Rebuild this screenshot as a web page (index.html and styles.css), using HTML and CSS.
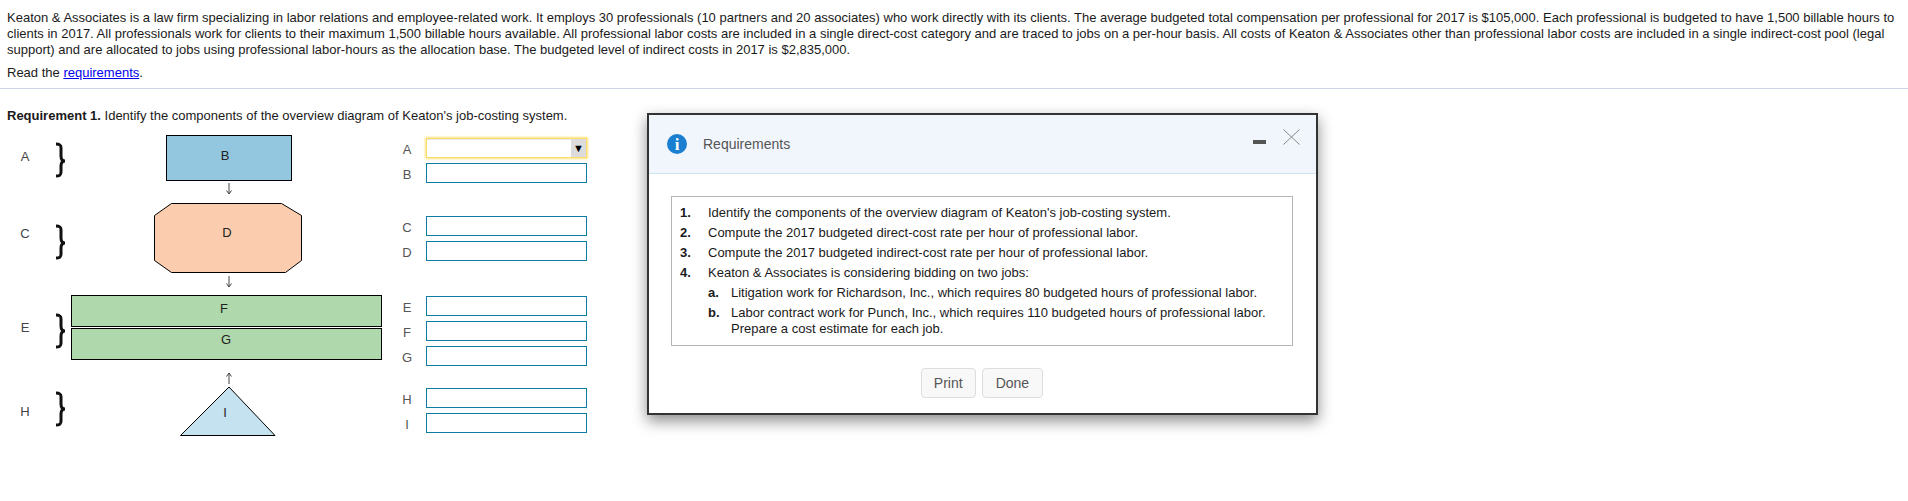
FILE: index.html
```html
<!DOCTYPE html>
<html lang="en">
<head>
  <meta charset="UTF-8">
  <title>Requirement 1</title>
  <link rel="stylesheet" href="styles.css">
</head>
<body>
  <div class="question">
    <p class="intro">Keaton &amp; Associates is a law firm specializing in labor relations and employee-related work. It employs 30 professionals (10 partners and 20 associates) who work directly with its clients. The average budgeted total compensation per professional for 2017 is $105,000. Each professional is budgeted to have 1,500 billable hours to clients in 2017. All professionals work for clients to their maximum 1,500 billable hours available. All professional labor costs are included in a single direct-cost category and are traced to jobs on a per-hour basis. All costs of Keaton &amp; Associates other than professional labor costs are included in a single indirect-cost pool (legal support) and are allocated to jobs using professional labor-hours as the allocation base. The budgeted level of indirect costs in 2017 is $2,835,000.</p>
    <p class="read-line">Read the <a href="#">requirements</a>.</p>
  </div>
  <hr class="divider">
  <p class="req-title"><b>Requirement 1.</b> Identify the components of the overview diagram of Keaton's job-costing system.</p>

  <div class="workspace">
    <!-- Overview diagram -->
    <svg class="diagram" width="397" height="310" viewBox="0 0 397 310">
      <rect x="166.5" y="5.5" width="125" height="45" fill="#93c6df" stroke="#000"/>
      <polygon points="171.5,73.5 281.5,73.5 301.5,85.5 301.5,130.5 285.5,142.5 171.5,142.5 154.5,130.5 154.5,85.5" fill="#fbcdae" stroke="#000"/>
      <rect x="71.5" y="165.5" width="310" height="31" fill="#afd8ac" stroke="#000"/>
      <rect x="71.5" y="198.5" width="310" height="31" fill="#afd8ac" stroke="#000"/>
      <polygon points="229,257 275,305.5 180.5,305.5" fill="#c5e2f0" stroke="#000"/>

      <g class="arrows">
        <path d="M229 53v11M226.500 60.500l2.500 3.500 2.500-3.500"/>
        <path d="M229 146v11M226.500 153.500l2.500 3.500 2.500-3.500"/>
        <path d="M229 254v-11M226.500 246.500l2.500-3.500 2.500 3.500"/>
      </g>

      <g class="braces">
        <path d="M56 14c4 0 5 1 5 4v8c0 3 1 5 4 5-3 0-4 2-4 5v6c0 3-1 4-5 4"/>
        <path d="M56 96c4 0 5 1 5 4v8c0 3 1 5 4 5-3 0-4 2-4 5v6c0 3-1 4-5 4"/>
        <path d="M56 185c4 0 5 1 5 4v7c0 3 1 5 4 5-3 0-4 2-4 5v7c0 3-1 4-5 4"/>
        <path d="M56 263c4 0 5 1 5 4v7c0 3 1 5 4 5-3 0-4 2-4 5v7c0 3-1 4-5 4"/>
      </g>

      <g class="side-labels">
        <text x="25" y="31">A</text>
        <text x="25" y="108">C</text>
        <text x="25" y="202">E</text>
        <text x="25" y="286">H</text>
      </g>
      <g class="node-labels">
        <text x="225" y="30">B</text>
        <text x="227" y="107">D</text>
        <text x="224" y="183">F</text>
        <text x="226" y="214">G</text>
        <text x="225" y="287">I</text>
      </g>
    </svg>

    <div class="answers">
      <div class="answer-group">
        <div class="answer-row">
          <label>A</label>
          <div class="select-box"><span class="select-arrow">▼</span></div>
        </div>
        <div class="answer-row"><label>B</label><div class="answer-input"></div></div>
      </div>
      <div class="answer-group group-c">
        <div class="answer-row"><label>C</label><div class="answer-input"></div></div>
        <div class="answer-row"><label>D</label><div class="answer-input"></div></div>
      </div>
      <div class="answer-group group-e">
        <div class="answer-row"><label>E</label><div class="answer-input"></div></div>
        <div class="answer-row"><label>F</label><div class="answer-input"></div></div>
        <div class="answer-row"><label>G</label><div class="answer-input"></div></div>
      </div>
      <div class="answer-group group-h">
        <div class="answer-row"><label>H</label><div class="answer-input"></div></div>
        <div class="answer-row"><label>I</label><div class="answer-input"></div></div>
      </div>
    </div>
  </div>

  <!-- Requirements popup -->
  <div class="modal">
    <div class="modal-header">
      <svg class="info-icon" width="20" height="20" viewBox="0 0 20 20">
        <circle cx="10" cy="10" r="10" fill="#1a7fd0"/>
        <text x="10" y="15.500" text-anchor="middle">i</text>
      </svg>
      <span class="modal-title">Requirements</span>
      <span class="minimize"></span>
      <svg class="close-icon" width="17" height="16" viewBox="0 0 17 16">
        <path d="M0.500 0.500l16 15M16.500 0.500l-16 15"/>
      </svg>
    </div>
    <div class="modal-body">
      <div class="req-box">
        <div class="req-item"><b class="num">1.</b><span>Identify the components of the overview diagram of Keaton's job-costing system.</span></div>
        <div class="req-item"><b class="num">2.</b><span>Compute the 2017 budgeted direct-cost rate per hour of professional labor.</span></div>
        <div class="req-item"><b class="num">3.</b><span>Compute the 2017 budgeted indirect-cost rate per hour of professional labor.</span></div>
        <div class="req-item"><b class="num">4.</b><span>Keaton &amp; Associates is considering bidding on two jobs:</span></div>
        <div class="req-item sub"><b class="num">a.</b><span>Litigation work for Richardson, Inc., which requires 80 budgeted hours of professional labor.</span></div>
        <div class="req-item sub"><b class="num">b.</b><span>Labor contract work for Punch, Inc., which requires 110 budgeted hours of professional labor.<br>Prepare a cost estimate for each job.</span></div>
      </div>
      <div class="modal-buttons">
        <button class="modal-button print-button">Print</button>
        <button class="modal-button done-button">Done</button>
      </div>
    </div>
  </div>
</body>
</html>
```

FILE: styles.css
```css
body {
  font-family: "Liberation Sans", Arial, sans-serif;
  font-size: 13px;
  line-height: 16px;
  margin: 0;
  padding: 0;
  background-color: white;
  color: #1a1a1a;
}

.question {
  padding: 10px 7px 0 7px;
}

.intro {
  margin: 0;
}

.read-line {
  margin: 7px 0 0 0;
}

.read-line a {
  color: #0000ee;
}

.divider {
  border: none;
  border-top: 1px solid #cdd3e5;
  margin: 7px 0 0 0;
}

.req-title {
  margin: 19px 0 0 7px;
}

.workspace {
  display: flex;
  margin-top: 6px;
}

.diagram {
  display: block;
  flex-shrink: 0;
}

.diagram text {
  font-size: 13px;
}

.arrows path {
  fill: none;
  stroke: #444;
  stroke-width: 1;
}

.braces path {
  fill: none;
  stroke: #111;
  stroke-width: 3;
}

.side-labels text {
  fill: #444;
  text-anchor: middle;
}

.node-labels text {
  fill: #222;
  text-anchor: middle;
}

.answers {
  padding-top: 8px;
}

.answer-group {
  display: flex;
  flex-direction: column;
  gap: 5px;
}

.group-c {
  margin-top: 33px;
}

.group-e {
  margin-top: 35px;
}

.group-h {
  margin-top: 22px;
}

.answer-row {
  display: flex;
  align-items: center;
  height: 20px;
}

.answer-row label {
  width: 20px;
  margin-right: 9px;
  padding-top: 3px;
  text-align: center;
  color: #555;
  font-size: 13px;
}

.answer-input {
  box-sizing: border-box;
  width: 161px;
  height: 20px;
  border: 1px solid #0e7ca0;
  background-color: white;
}

.select-box {
  box-sizing: border-box;
  display: flex;
  justify-content: flex-end;
  width: 161px;
  height: 20px;
  border: 1px solid #fcdc6a;
  box-shadow: 0 0 2px 1px #fde27e, inset 0 1px 0 #e8e8e8;
  background-color: white;
}

.select-arrow {
  width: 15px;
  background-color: #dcdcdc;
  text-align: center;
  font-size: 11px;
  line-height: 18px;
  color: #000;
}

.modal {
  position: absolute;
  left: 647px;
  top: 113px;
  box-sizing: border-box;
  width: 671px;
  height: 302px;
  border: 2px solid #333;
  background-color: white;
  box-shadow: 0 6px 14px rgba(0, 0, 0, 0.45);
}

.modal-header {
  position: relative;
  box-sizing: border-box;
  display: flex;
  align-items: center;
  height: 59px;
  padding-left: 18px;
  background-color: #f1f6fd;
  border-bottom: 1px solid #cfe3f0;
}

.info-icon text {
  font-family: "Liberation Serif", serif;
  font-weight: bold;
  font-size: 17px;
  fill: white;
}

.modal-title {
  margin-left: 16px;
  font-size: 14px;
  color: #555;
}

.minimize {
  position: absolute;
  left: 604px;
  top: 25px;
  width: 13px;
  height: 4px;
  background-color: #555;
}

.close-icon {
  position: absolute;
  left: 634px;
  top: 14px;
}

.close-icon path {
  fill: none;
  stroke: #888;
  stroke-width: 1;
}

.modal-body {
  padding: 22px 23px 0 22px;
}

.req-box {
  display: flex;
  flex-direction: column;
  gap: 4px;
  padding: 8px 8px 8px 8px;
  border: 1px solid #b5b5b5;
}

.req-item {
  display: flex;
}

.num {
  width: 28px;
  flex-shrink: 0;
}

.sub {
  padding-left: 28px;
}

.sub .num {
  width: 23px;
}

.modal-buttons {
  display: flex;
  justify-content: center;
  gap: 6px;
  margin-top: 22px;
}

.modal-button {
  height: 30px;
  padding: 0 13px;
  font-family: inherit;
  font-size: 14px;
  color: #555;
  background-color: #f8f8f8;
  border: 1px solid #ddd;
  border-radius: 4px;
}

.print-button {
  padding: 0 12px;
}
```
